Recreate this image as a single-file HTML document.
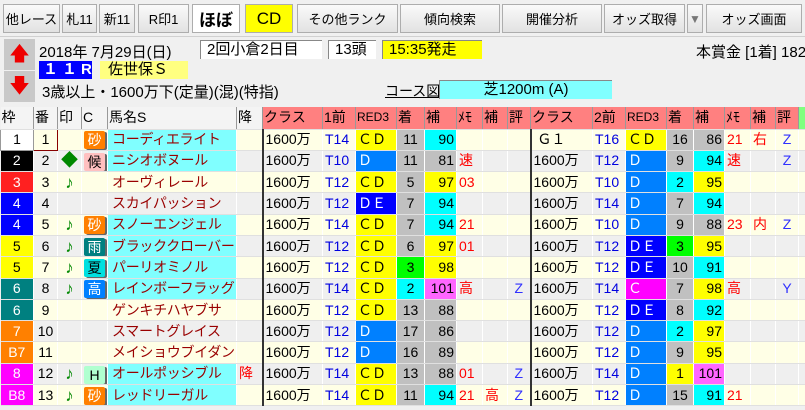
<!DOCTYPE html>
<html><head><meta charset="utf-8"><style>
*{box-sizing:border-box;margin:0;padding:0}
body{width:805px;height:410px;overflow:hidden;background:#f0f0f0;font-family:"Liberation Sans","Noto Sans CJK JP",sans-serif;font-size:14px;color:#000;position:relative}
.b{position:absolute;top:4px;height:29px;background:linear-gradient(#fafafa,#e2e2e2);border:1px solid #adadad;display:flex;align-items:center;justify-content:center;font-size:13px;white-space:nowrap;overflow:hidden}
.a{position:absolute;white-space:nowrap}
table{position:absolute;left:0;top:107px;border-collapse:collapse;table-layout:fixed;width:805px}
tr{height:21.3px}
td{height:21.3px;border-right:1px solid #fff;border-bottom:1px solid #e0e0e0;white-space:nowrap;overflow:hidden;padding:0 2px;font-size:14px;line-height:19px}
tr.h{height:22px}
tr.h td{height:22px;background:#f4f4f4;border-right:1px solid #999;font-size:14px;padding:0 1px}
tr.h td.p{background:#ff8080}
tr:nth-child(even) td{background:#ffffe6}
tr:nth-child(odd):not(.h) td{background:#efefef}
td.c{text-align:center}td.r{text-align:right}
td.w1{background:#fff!important;text-align:center;border:1px solid #999}
td.cy{background:#80ffff!important;color:#900}
td.nm{color:#900}
td.cy,td.nm{font-size:14px;letter-spacing:-0.3px;padding-left:4px}
td.y{background:#ffff00!important}
td.bl{background:#0080ff!important;color:#fff}
td.db{background:#0000ff!important;color:#fff}
td.mg{background:#ff00ff!important;color:#fff}
td.g{background:#c0c0c0!important}
td.cn{background:#00ffff!important}
td.gr{background:#00ff00!important}
td.pk{background:#ff66ff!important}
td.t{color:#0000e0}
td.m{color:#f00}
td.z{color:#3030ff;text-align:center}
td.k{border-left:2px solid #333}
.ic{display:inline-block;width:21px;height:18px;font-size:14px;line-height:18px;text-align:center;border-radius:2px;box-shadow:2px 1px 0 #666;vertical-align:middle}
.gn{color:#080;font-size:17px!important}
</style></head><body>
<div class="b" style="left:3px;width:57px">他レース</div>
<div class="b" style="left:62px;width:35px">札11</div>
<div class="b" style="left:99px;width:36px">新11</div>
<div class="b" style="left:138px;width:51px">R印1</div>
<div class="b" style="left:192px;width:48px;background:#fff;font-weight:bold;font-size:17px">ほぼ</div>
<div class="b" style="left:245px;width:48px;background:#ffff00;font-size:17px">CD</div>
<div class="b" style="left:297px;width:101px">その他ランク</div>
<div class="b" style="left:400px;width:100px">傾向検索</div>
<div class="b" style="left:502px;width:100px">開催分析</div>
<div class="b" style="left:604px;width:81px">オッズ取得</div>
<div class="b" style="left:687px;width:16px;color:#777;font-size:12px">▼</div>
<div class="b" style="left:706px;width:96px">オッズ画面</div>
<div class="a" style="left:4px;top:39px;width:31px;height:31px;background:#c8c8c8;color:#e00;font-size:20px;text-align:center;line-height:31px">🡅</div>
<div class="a" style="left:4px;top:71px;width:31px;height:31px;background:#c8c8c8;color:#e00;font-size:20px;text-align:center;line-height:31px">🡇</div>
<div class="a" style="left:0;top:36px;width:805px;height:1px;background:#d0d0d0"></div>
<div class="a" style="left:39px;top:41px;font-size:15px">2018年 7月29日(日)</div>
<div class="a" style="left:200px;top:40px;width:122px;height:19px;background:#fff;border-top:1px solid #888;border-left:1px solid #888;padding-left:6px;font-size:15px;line-height:18px">2回小倉2日目</div>
<div class="a" style="left:328px;top:40px;width:48px;height:19px;background:#fff;border-top:1px solid #888;border-left:1px solid #888;padding-left:6px;font-size:15px;line-height:18px">13頭</div>
<div class="a" style="left:382px;top:40px;width:100px;height:19px;background:#ffff00;border-top:1px solid #888;border-left:1px solid #888;padding-left:6px;font-size:15px;line-height:18px">15:35発走</div>
<div class="a" style="left:696px;top:41px;font-size:15px">本賞金 [1着] 1820</div>
<div class="a" style="left:39px;top:61px;width:53px;height:18px;background:#0000ff;color:#fff;font-weight:bold;font-size:15px;line-height:18px;padding-left:4px;letter-spacing:4px">１１R</div>
<div class="a" style="left:100px;top:61px;width:88px;height:18px;background:#ffff80;font-size:15px;line-height:18px;padding-left:8px">佐世保Ｓ</div>
<div class="a" style="left:42px;top:81px;font-size:15px">3歳以上・1600万下(定量)(混)(特指)</div>
<div class="a" style="left:385px;top:81px;font-size:14px;text-decoration:underline">コース図</div>
<div class="a" style="left:439px;top:80px;width:173px;height:19px;background:#80ffff;border-top:1px solid #888;border-left:1px solid #888;text-align:center;font-size:15px;line-height:18px">芝1200m (A)</div>
<table>
<colgroup><col style="width:33px"><col style="width:24px"><col style="width:24px"><col style="width:26px"><col style="width:129px"><col style="width:26px"><col style="width:60px"><col style="width:33px"><col style="width:41px"><col style="width:28px"><col style="width:32px"><col style="width:26px"><col style="width:25px"><col style="width:23px"><col style="width:62px"><col style="width:33px"><col style="width:41px"><col style="width:27px"><col style="width:31px"><col style="width:26px"><col style="width:25px"><col style="width:23px"><col style="width:7px"></colgroup>
<tr class="h"><td>枠</td><td>番</td><td>印</td><td>C</td><td>馬名S</td><td>降</td><td class="p">クラス</td><td class="p">1前</td><td class="p" style="font-size:12px">RED3</td><td class="p">着</td><td class="p">補</td><td class="p">ﾒﾓ</td><td class="p">補</td><td class="p">評</td><td class="p">クラス</td><td class="p">2前</td><td class="p" style="font-size:12px">RED3</td><td class="p">着</td><td class="p">補</td><td class="p">ﾒﾓ</td><td class="p">補</td><td class="p">評</td><td style="background:#80ff80"></td></tr>
<tr><td class="w1">1</td><td class="c" style="border:1px solid #800">1</td><td></td><td><span class="ic" style="background:#ff8000;color:#fff">砂</span></td><td class="cy">コーディエライト</td><td></td><td class="k">1600万</td><td class="t">T14</td><td class="y">ＣＤ</td><td class="g c">11</td><td class="cn r">90</td><td></td><td></td><td></td><td class="k">&nbsp;Ｇ１</td><td class="t">T16</td><td class="y">ＣＤ</td><td class="g c">16</td><td class="g r">86</td><td class="m">21</td><td class="m">右</td><td class="z">Z</td><td></td></tr>
<tr><td class="c" style="background:#000!important;color:#fff">2</td><td class="c">2</td><td class="gn c">◆</td><td><span class="ic" style="background:#ffc0c0">候</span></td><td class="cy">ニシオボヌール</td><td></td><td class="k">1600万</td><td class="t">T10</td><td class="bl">Ｄ</td><td class="g c">11</td><td class="g r">81</td><td class="m">速</td><td></td><td></td><td class="k">1600万</td><td class="t">T12</td><td class="bl">Ｄ</td><td class="g c">9</td><td class="cn r">94</td><td class="m">速</td><td></td><td class="z">Z</td><td></td></tr>
<tr><td class="c" style="background:#ff2020!important;color:#fff">3</td><td class="c">3</td><td class="gn c">♪</td><td></td><td class="nm">オーヴィレール</td><td></td><td class="k">1600万</td><td class="t">T12</td><td class="y">ＣＤ</td><td class="g c">5</td><td class="y r">97</td><td class="m">03</td><td></td><td></td><td class="k">1600万</td><td class="t">T10</td><td class="bl">Ｄ</td><td class="cn c">2</td><td class="y r">95</td><td></td><td></td><td></td><td></td></tr>
<tr><td class="c" style="background:#0000ff!important;color:#fff">4</td><td class="c">4</td><td></td><td></td><td class="nm">スカイパッション</td><td></td><td class="k">1600万</td><td class="t">T12</td><td class="db">ＤＥ</td><td class="g c">7</td><td class="cn r">94</td><td></td><td></td><td></td><td class="k">1600万</td><td class="t">T14</td><td class="bl">Ｄ</td><td class="g c">7</td><td class="cn r">94</td><td></td><td></td><td></td><td></td></tr>
<tr><td class="c" style="background:#0000ff!important;color:#fff">4</td><td class="c">5</td><td class="gn c">♪</td><td><span class="ic" style="background:#ff8000;color:#fff">砂</span></td><td class="cy">スノーエンジェル</td><td></td><td class="k">1600万</td><td class="t">T14</td><td class="y">ＣＤ</td><td class="g c">7</td><td class="cn r">94</td><td class="m">21</td><td></td><td></td><td class="k">1600万</td><td class="t">T10</td><td class="bl">Ｄ</td><td class="g c">9</td><td class="g r">88</td><td class="m">23</td><td class="m">内</td><td class="z">Z</td><td></td></tr>
<tr><td class="c" style="background:#ffff00!important">5</td><td class="c">6</td><td class="gn c">♪</td><td><span class="ic" style="background:#008080;color:#fff">雨</span></td><td class="cy">ブラッククローバー</td><td></td><td class="k">1600万</td><td class="t">T12</td><td class="y">ＣＤ</td><td class="g c">6</td><td class="y r">97</td><td class="m">01</td><td></td><td></td><td class="k">1600万</td><td class="t">T12</td><td class="db">ＤＥ</td><td class="gr c">3</td><td class="y r">95</td><td></td><td></td><td></td><td></td></tr>
<tr><td class="c" style="background:#ffff00!important">5</td><td class="c">7</td><td class="gn c">♪</td><td><span class="ic" style="background:#00e0e0">夏</span></td><td class="cy">パーリオミノル</td><td></td><td class="k">1600万</td><td class="t">T12</td><td class="y">ＣＤ</td><td class="gr c">3</td><td class="y r">98</td><td></td><td></td><td></td><td class="k">1600万</td><td class="t">T12</td><td class="db">ＤＥ</td><td class="g c">10</td><td class="cn r">91</td><td></td><td></td><td></td><td></td></tr>
<tr><td class="c" style="background:#008080!important;color:#fff">6</td><td class="c">8</td><td class="gn c">♪</td><td><span class="ic" style="background:#0080ff;color:#fff">高</span></td><td class="cy">レインボーフラッグ</td><td></td><td class="k">1600万</td><td class="t">T14</td><td class="y">ＣＤ</td><td class="cn c">2</td><td class="pk r">101</td><td class="m">高</td><td></td><td class="z">Z</td><td class="k">1600万</td><td class="t">T14</td><td class="mg">Ｃ</td><td class="g c">7</td><td class="y r">98</td><td class="m">高</td><td></td><td class="z">Y</td><td></td></tr>
<tr><td class="c" style="background:#008080!important;color:#fff">6</td><td class="c">9</td><td></td><td></td><td class="nm">ゲンキチハヤブサ</td><td></td><td class="k">1600万</td><td class="t">T12</td><td class="y">ＣＤ</td><td class="g c">13</td><td class="g r">88</td><td></td><td></td><td></td><td class="k">1600万</td><td class="t">T12</td><td class="db">ＤＥ</td><td class="g c">8</td><td class="cn r">92</td><td></td><td></td><td></td><td></td></tr>
<tr><td class="c" style="background:#ff8000!important;color:#fff">7</td><td class="c">10</td><td></td><td></td><td class="nm">スマートグレイス</td><td></td><td class="k">1600万</td><td class="t">T12</td><td class="bl">Ｄ</td><td class="g c">17</td><td class="g r">86</td><td></td><td></td><td></td><td class="k">1600万</td><td class="t">T12</td><td class="bl">Ｄ</td><td class="cn c">2</td><td class="y r">97</td><td></td><td></td><td></td><td></td></tr>
<tr><td class="c" style="background:#ff8000!important;color:#fff">B7</td><td class="c">11</td><td></td><td></td><td class="nm">メイショウブイダン</td><td></td><td class="k">1600万</td><td class="t">T12</td><td class="bl">Ｄ</td><td class="g c">16</td><td class="g r">89</td><td></td><td></td><td></td><td class="k">1600万</td><td class="t">T12</td><td class="bl">Ｄ</td><td class="g c">9</td><td class="y r">95</td><td></td><td></td><td></td><td></td></tr>
<tr><td class="c" style="background:#ff00ff!important;color:#fff">8</td><td class="c">12</td><td class="gn c">♪</td><td><span class="ic" style="background:#b0ffd0">H</span></td><td class="cy">オールポッシブル</td><td class="m">降</td><td class="k">1600万</td><td class="t">T14</td><td class="y">ＣＤ</td><td class="g c">13</td><td class="g r">88</td><td class="m">01</td><td></td><td class="z">Z</td><td class="k">1600万</td><td class="t">T14</td><td class="bl">Ｄ</td><td class="y c">1</td><td class="pk r">101</td><td></td><td></td><td></td><td></td></tr>
<tr><td class="c" style="background:#ff00ff!important;color:#fff">B8</td><td class="c">13</td><td class="gn c">♪</td><td><span class="ic" style="background:#ff8000;color:#fff">砂</span></td><td class="cy">レッドリーガル</td><td></td><td class="k">1600万</td><td class="t">T14</td><td class="y">ＣＤ</td><td class="g c">11</td><td class="cn r">94</td><td class="m">21</td><td class="m">高</td><td class="z">Z</td><td class="k">1600万</td><td class="t">T12</td><td class="bl">Ｄ</td><td class="g c">15</td><td class="cn r">91</td><td class="m">21</td><td></td><td></td><td></td></tr>
</table>
</body></html>
